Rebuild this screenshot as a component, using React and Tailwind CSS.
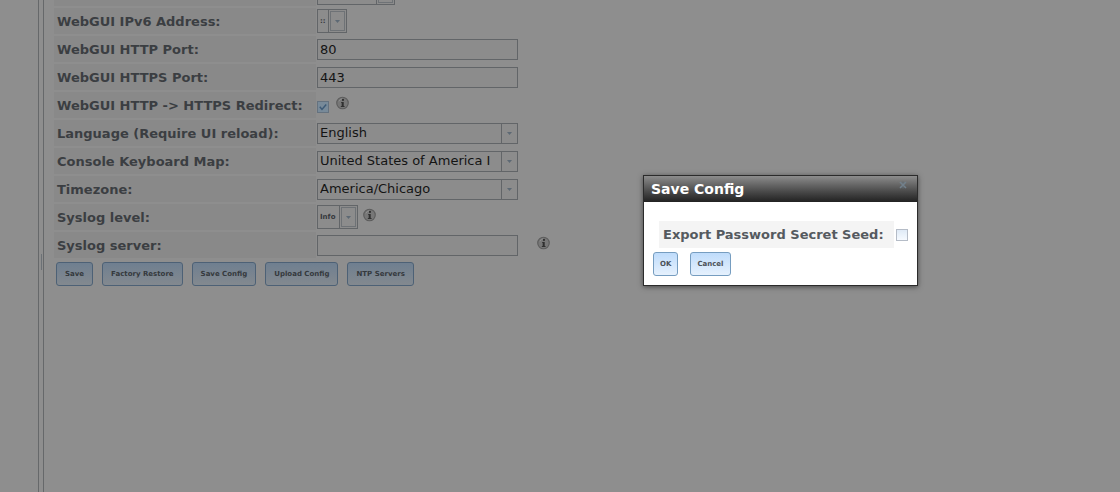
import { useState } from "react";
import clsx from "clsx";

const keyboardMaps = ["United States of America I", "United Kingdom ISO-8859-1", "German ISO-8859-1"];

function InfoIcon({ className }) {
  return (
    <svg className={clsx("shrink-0 self-start mt-1", className)} width="13" height="14" viewBox="0 0 14 14" aria-label="Help">
      <circle cx="7" cy="7" r="6.2" fill="#777777" stroke="#5c5c5c" strokeWidth="1.2" />
      <path d="M3.2 5.2 A4.4 4.4 0 0 1 7 2.4" fill="none" stroke="#929292" strokeWidth="1" />
      <circle cx="7.5" cy="3.7" r="1.2" fill="#303030" />
      <path d="M5.4 5.8 H8.3 V10.2 H9.2 V11.2 H5.2 V10.2 H6.1 V6.8 H5.4 Z" fill="#303030" />
    </svg>
  );
}

function Arrow() {
  return (
    <svg width="5" height="3" viewBox="0 0 5 3" aria-hidden="true">
      <path d="M0 0 H5 L2.5 3 Z" fill="#5d6974" />
    </svg>
  );
}

function CheckBox({ id, checked, onChange, dimmed }) {
  return (
    <span className={clsx("grid shrink-0", dimmed && "mt-1")}>
      <input
        id={id}
        type="checkbox"
        checked={checked}
        onChange={onChange}
        className={clsx(
          "col-start-1 row-start-1 size-3 appearance-none border",
          dimmed ? "border-[#65727f] bg-[#788a99]" : "border-[#b5bcc7] bg-linear-to-b from-[#dfeaf6] to-[#f6faff]"
        )}
      />
      {checked && (
        <svg className="pointer-events-none col-start-1 row-start-1" width="12" height="12" viewBox="0 0 12 12">
          <path d="M2.8 5.8 L5 8.4 L9.2 3.6" fill="none" stroke="#3d5a76" strokeWidth="1.5" />
        </svg>
      )}
    </span>
  );
}

function TextField({ id, defaultValue }) {
  return (
    <input
      id={id}
      type="text"
      defaultValue={defaultValue}
      className="h-[21px] w-[201px] border border-[#626568] bg-[#8c8c8c] px-0.5 text-[13px] leading-4 text-[#141414]"
    />
  );
}

function ComboField({ id, options }) {
  return (
    <div className="flex h-[21px] w-[201px] border border-[#626568] bg-[#8c8c8c]">
      <select id={id} className="min-w-0 flex-1 appearance-none pl-0.5 text-[13px] leading-4 text-[#141414]">
        {options.map((o) => (
          <option key={o}>{o}</option>
        ))}
      </select>
      <span className="flex w-4 items-center justify-center border-l border-[#626568]">
        <Arrow />
      </span>
    </div>
  );
}

function SmallSelect({ id, label, options, className }) {
  return (
    <div className={clsx("flex h-6 border border-[#626568] bg-[#8c8c8c]", className)}>
      <select
        id={id}
        aria-label={label}
        className="min-w-0 flex-1 appearance-none pt-px pl-0.5 text-[7px] font-bold text-[#36393c]"
      >
        {options.map((o) => (
          <option key={o}>{o}</option>
        ))}
      </select>
      <span className="flex w-[18px] border-l border-[#626568] p-px">
        <span className="flex flex-1 items-center justify-center border border-[#6e7276]">
          <Arrow />
        </span>
      </span>
    </div>
  );
}

function Row({ id, label, children }) {
  return (
    <div className="flex h-[26px] gap-px">
      <label
        htmlFor={id}
        className="flex w-[262px] shrink-0 items-center bg-[#898989] pt-0.5 pl-[3px] text-[13px] leading-4 font-bold whitespace-nowrap text-[#3b3e42]"
      >
        {label}
      </label>
      <div className="flex items-center">{children}</div>
    </div>
  );
}

function PageButton({ children, onClick }) {
  return (
    <button
      type="button"
      onClick={onClick}
      className="h-6 rounded-[3px] border border-[#4d6176] bg-linear-to-b from-[#6f7f90] to-[#83898f] px-2 text-[7px] font-bold text-[#35393d]"
    >
      {children}
    </button>
  );
}

function DialogButton({ children, onClick }) {
  return (
    <button
      type="button"
      onClick={onClick}
      className="h-6 rounded-[3px] border border-[#769dc0] bg-linear-to-b from-[#bfdcfb] to-[#e6f1fd] px-1.5 text-[7px] font-bold text-[#4c5157]"
    >
      {children}
    </button>
  );
}

function SaveConfigDialog({ onClose }) {
  const [seed, setSeed] = useState(false);

  return (
    <div
      role="dialog"
      aria-labelledby="dialog-title"
      className="absolute top-[175px] left-[643px] w-[275px] border border-[#2b2b2b] bg-white shadow-[0_1px_5px_rgba(0,0,0,0.5)]"
    >
      <div className="flex h-[26px] justify-between bg-linear-to-b from-[#8d8d8d] to-[#222222] px-[7px]">
        <h2 id="dialog-title" className="self-center text-[14px] leading-4 font-bold text-white">
          Save Config
        </h2>
        <button type="button" aria-label="Close" onClick={onClose} className="self-start pt-1">
          <svg width="14" height="10" viewBox="0 0 14 10">
            <path d="M4 2 L10 8 M10 2 L4 8" stroke="#71808c" strokeWidth="1.6" />
            <path d="M7 1.5 V3 M7 7 V8.5" stroke="#5f6c76" strokeWidth="1" />
          </svg>
        </button>
      </div>
      <div className="px-[9px] pt-[19px] pb-[9px]">
        <div className="flex items-center gap-0.5 pl-1.5">
          <label
            htmlFor="seed"
            className="flex h-[27px] flex-1 items-center bg-[#f4f4f4] px-1 text-[13px] font-bold whitespace-nowrap text-[#555a5f]"
          >
            Export Password Secret Seed:
          </label>
          <CheckBox id="seed" checked={seed} onChange={(e) => setSeed(e.target.checked)} />
        </div>
        <div className="mt-1 flex gap-3">
          <DialogButton onClick={onClose}>OK</DialogButton>
          <DialogButton onClick={onClose}>Cancel</DialogButton>
        </div>
      </div>
    </div>
  );
}

export default function App() {
  const [redirect, setRedirect] = useState(true);
  const [dialogOpen, setDialogOpen] = useState(true);

  return (
    <div className="relative flex min-h-screen overflow-hidden bg-[#8e8e8e] font-['DejaVu_Sans',Verdana,sans-serif]">
      {/* navigation pane and splitter */}
      <aside className="w-[38px] shrink-0" />
      <div className="flex w-1.5 shrink-0 items-center justify-center border-x border-[#66686a]">
        <span className="mt-8 h-4 w-px bg-[#6c7176]" />
      </div>

      {/* the form is scrolled, so its first row is cut by the top edge */}
      <main className="-mt-5 min-w-0 flex-1 pl-2.5">
        <form className="flex flex-col gap-0.5">
          <Row id="ipv4">
            <SmallSelect id="ipv4" label="IPv4 address" options={[""]} className="w-[78px]" />
          </Row>
          <Row id="ipv6" label="WebGUI IPv6 Address:">
            <SmallSelect id="ipv6" options={["::"]} className="w-[30px]" />
          </Row>
          <Row id="http" label="WebGUI HTTP Port:">
            <TextField id="http" defaultValue="80" />
          </Row>
          <Row id="https" label="WebGUI HTTPS Port:">
            <TextField id="https" defaultValue="443" />
          </Row>
          <Row id="redirect" label="WebGUI HTTP -> HTTPS Redirect:">
            <CheckBox id="redirect" dimmed checked={redirect} onChange={(e) => setRedirect(e.target.checked)} />
            <InfoIcon className="ml-[7px]" />
          </Row>
          <Row id="language" label="Language (Require UI reload):">
            <ComboField id="language" options={["English", "German", "French"]} />
          </Row>
          <Row id="keymap" label="Console Keyboard Map:">
            <ComboField id="keymap" options={keyboardMaps} />
          </Row>
          <Row id="timezone" label="Timezone:">
            <ComboField id="timezone" options={["America/Chicago", "America/New_York", "Europe/London"]} />
          </Row>
          <Row id="loglevel" label="Syslog level:">
            <SmallSelect id="loglevel" options={["Info", "Warning", "Error"]} className="w-[41px]" />
            <InfoIcon className="ml-[5px]" />
          </Row>
          <Row id="logserver" label="Syslog server:">
            <TextField id="logserver" defaultValue="" />
            <InfoIcon className="ml-[19px]" />
          </Row>
          <div className="flex gap-[9px] pt-0.5 pl-0.5">
            <PageButton>Save</PageButton>
            <PageButton>Factory Restore</PageButton>
            <PageButton onClick={() => setDialogOpen(true)}>Save Config</PageButton>
            <PageButton>Upload Config</PageButton>
            <PageButton>NTP Servers</PageButton>
          </div>
        </form>
      </main>

      {dialogOpen && <SaveConfigDialog onClose={() => setDialogOpen(false)} />}
    </div>
  );
}
